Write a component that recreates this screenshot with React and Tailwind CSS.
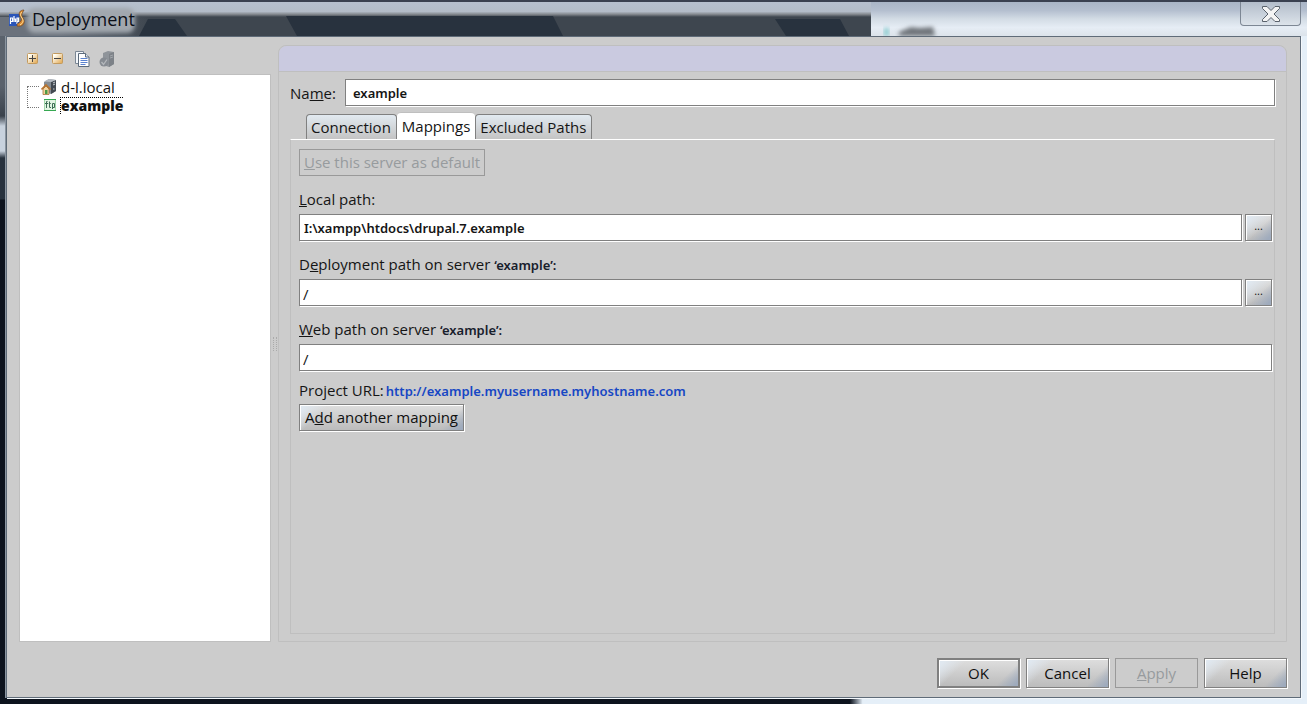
import { useState } from 'react';

const TABS = [
  { id: 'connection', label: 'Connection' },
  { id: 'mappings', label: 'Mappings' },
  { id: 'excluded', label: 'Excluded Paths' },
];

const BUTTON =
  'border-[#808080] bg-[linear-gradient(135deg,#e0e8f0_4px,transparent_20px),linear-gradient(315deg,#9fabbd_3px,transparent_16px),linear-gradient(#dedede,#bcbcbc)] text-[#101010] shadow-[inset_1px_1px_0_#fff,1px_1px_0_#fff]';
const BUTTON_OFF = 'border border-[#999] text-[#979b9e]';
const FIELD =
  'h-[27px] min-w-0 flex-1 border border-[#808080] bg-white shadow-[1px_1px_0_#fff] outline-none';
const BOLD = "font-['Noto_Sans','Open_Sans',sans-serif] text-[13px] font-semibold";

function LogoIcon() {
  return (
    <svg className="h-5 w-[18px]" viewBox="0 0 18 20" aria-hidden="true">
      <rect x="1" y="5" width="10" height="12" fill="#2a55b8" />
      <path d="M2.500 15V9h2v3.500h-2M6 7v6M6 10h1.500v3M9 15V9h1.500v3.500H9" fill="none" stroke="#fff" strokeWidth="1.200" />
      <path d="M16 1c-4 0-6 3-4 6 1 2 2 3 1 5-1 1-2 2-4 3v2c5 1 8-2 7-6-1-3-3-4-2-6 0-1 1-2 2-4z" fill="#d98a34" stroke="#70451f" strokeWidth=".7" />
      <path d="M14 3c-2 2-2 3 0 6 2 3 1 5-2 7" fill="none" stroke="#ffe19b" strokeWidth="1" />
    </svg>
  );
}

function SignIcon({ plus }) {
  const id = plus ? 'signPlus' : 'signMinus';
  return (
    <svg className="size-[11px]" viewBox="0 0 11 11" aria-hidden="true">
      <defs>
        <linearGradient id={id} x1="0" y1="0" x2="1" y2="1">
          <stop offset="0.2" stopColor="#fffdf3" />
          <stop offset="1" stopColor="#e0a347" />
        </linearGradient>
      </defs>
      <rect x=".5" y=".5" width="10" height="10" rx="1" fill={`url(#${id})`} stroke="#c39a5e" />
      <path d={plus ? 'M2 5.500h7M5.500 2v7' : 'M2 5.500h7'} stroke="#444" />
    </svg>
  );
}

function CopyIcon() {
  return (
    <svg className="h-4 w-[15px]" viewBox="0 0 15 16" aria-hidden="true">
      <path d="M.5.5h8v12h-8z" fill="#f4f7fb" stroke="#7b8794" />
      <path d="M3.500 2.500h7l3.500 3.500v9.500H3.500z" fill="#fff" stroke="#5c6b7c" />
      <path d="M10.500 2.500v3.500h3.500" fill="#dfe7f0" stroke="#5c6b7c" />
      <path d="M5.500 7.500h7M5.500 9.500h7M5.500 11.500h7M5.500 13.500h5" stroke="#5b83d0" />
    </svg>
  );
}

function ServerCheckIcon() {
  return (
    <svg className="h-4 w-4" viewBox="0 0 16 16" aria-hidden="true">
      <path d="M4 2l5-2 6 1v12l-5 3-6-2z" fill="#8f949a" />
      <path d="M10 3l5-2v12l-5 3z" fill="#7d8288" />
      <path d="M11 5l3-1M11 7l3-1" stroke="#a2a6ab" />
      <circle cx="5" cy="11" r="4.500" fill="#868b92" />
      <path d="M2.500 11l2 2.500 3.500-5" fill="none" stroke="#b4b8bc" strokeWidth="1.300" />
    </svg>
  );
}

function HomeServerIcon() {
  return (
    <svg className="h-4 w-4" viewBox="0 0 16 16" aria-hidden="true">
      <path d="M3 3l5-3 7 1v11l-5 3-7-2z" fill="#858c94" />
      <path d="M10 3l5-2v11l-5 3z" fill="#434a52" />
      <path d="M3 2.500L8 0l7 1-5 2z" fill="#b4bac1" />
      <path d="M12 4l2-1M12 6l2-1M12 10h1.500" stroke="#c9cfd4" />
      <path d="M2 10l3-3 3 3v5.500H2z" fill="#f2d3a0" stroke="#a06426" strokeWidth=".7" />
      <path d="M.5 10.500l4.500-4.500 4.500 4.500" fill="none" stroke="#b8742f" strokeWidth="1.600" />
      <rect x="4" y="11" width="2.500" height="4" fill="#4d9b46" />
    </svg>
  );
}

function FtpIcon() {
  return (
    <svg className="h-3 w-3" viewBox="0 0 12 12" aria-hidden="true">
      <rect width="12" height="12" fill="#e2f5e3" />
      <path d="M0 .5h12M0 11.500h12" stroke="#36a852" />
      <path d="M.5 1v10M11.500 1v10" stroke="#a3d8ac" />
      <path d="M3.500 2.500H2.500V9M1 4.500h3M5.500 2.500v6H7M4.800 4.500h2M8.500 10V4.500h2v4h-2" fill="none" stroke="#3d6e55" />
    </svg>
  );
}

function CloseIcon() {
  return (
    <svg className="h-4 w-5" viewBox="0 0 20 16" aria-hidden="true">
      <path d="M1.500.5h4.500l4 4 4-4h4.500v2L13 8l5.500 5.500v2H14l-4-4-4 4H1.500v-2L7 8 1.500 2.500z" fill="#f4f4f4" stroke="#5a626c" />
    </svg>
  );
}

// what shows through the glass of the title bar
function Backdrop() {
  return (
    <svg className="absolute inset-0 h-full w-full" viewBox="0 0 1307 34" preserveAspectRatio="none" aria-hidden="true">
      <defs>
        <linearGradient id="glass" x1="0" y1="0" x2="0" y2="1">
          <stop offset="0" stopColor="#a9b5c6" />
          <stop offset="0.25" stopColor="#b4bfcf" />
          <stop offset="0.5" stopColor="#d3dce5" />
          <stop offset="0.75" stopColor="#e6edf5" />
          <stop offset="1" stopColor="#dce3ea" />
        </linearGradient>
        <linearGradient id="shade" x1="0" y1="0" x2="0" y2="1">
          <stop offset="0" stopColor="#b6c0ce" />
          <stop offset="0.28" stopColor="#b3bcc8" />
          <stop offset="0.36" stopColor="#858a90" />
          <stop offset="0.44" stopColor="#3e464f" />
          <stop offset="1" stopColor="#3e464f" />
        </linearGradient>
        <linearGradient id="corner" x1="0" y1="0" x2="1" y2="0">
          <stop offset="0.4" stopColor="#6b727c" />
          <stop offset="1" stopColor="#3e464f" />
        </linearGradient>
        <filter id="soft" x="-20%" y="-40%" width="140%" height="180%">
          <feGaussianBlur stdDeviation="2" />
        </filter>
      </defs>
      <rect width="1307" height="34" fill="url(#glass)" />
      <rect width="871" height="34" fill="url(#shade)" />
      <rect y="15" width="150" height="19" fill="url(#corner)" />
      <path d="M148 17h27l12 17h-48zM286 14h267l10 20H297zM775 17h65l9 17h-63z" fill="#28323e" />
      <path d="M870 12v22" stroke="#858a90" strokeWidth="3" filter="url(#soft)" />
      <rect x="884" y="26" width="5" height="8" fill="#8ccdd0" filter="url(#soft)" />
      <path d="M899 34v-4l12-5 8 1 14-1 2 9z" fill="#70757a" filter="url(#soft)" />
      <rect x="27" y="6" width="108" height="25" rx="8" fill="#a1a7ae" filter="url(#soft)" />
    </svg>
  );
}

function TitleBar() {
  return (
    <header className="relative flex h-9 items-start justify-between border-t-2 border-[#3a4150]">
      <Backdrop />
      <div className="relative flex h-full items-center gap-1.5 pl-2">
        <LogoIcon />
        <h1 className="text-lg text-[#0b0f18]">Deployment</h1>
      </div>
      <button
        type="button"
        aria-label="Close"
        className="relative mr-1.5 flex h-6 w-[61px] items-center justify-center rounded-b border border-t-0 border-[#7d8794] bg-linear-to-b from-[#b3bdca] to-[#dce3ea]"
      >
        <CloseIcon />
      </button>
    </header>
  );
}

function ServerTree() {
  return (
    <aside className="flex w-[252px] shrink-0 flex-col">
      <div className="flex h-[29px] items-center gap-[14px] pb-0.5 pl-2">
        <button type="button" aria-label="Add server"><SignIcon plus /></button>
        <button type="button" aria-label="Remove server"><SignIcon /></button>
        <div className="-ml-0.5 flex items-center gap-[9px]">
          <button type="button" aria-label="Copy server"><CopyIcon /></button>
          <button type="button" aria-label="Use as default" disabled><ServerCheckIcon /></button>
        </div>
      </div>
      <div className="flex flex-1 border border-[#bfbfbf] bg-white pt-[3px] pl-[7px]">
        <div className="mt-2 h-[22px] w-3 border-y border-l border-dotted border-[#777]" />
        <ul className="pl-0.5 leading-[18px] text-[#111]">
          <li className="flex h-[18px] items-center gap-1">
            <HomeServerIcon />
            <span>d-l.local</span>
          </li>
          <li className="flex h-[18px] items-center gap-1 pl-[3px]">
            <FtpIcon />
            <span className="border-t border-l border-dotted border-black text-[14px] leading-4 font-extrabold">example</span>
          </li>
        </ul>
      </div>
    </aside>
  );
}

function PathField({ id, label, value, bold, browse }) {
  return (
    <div className="mb-2.5">
      <label htmlFor={id} className="block h-7 leading-[26px]">{label}</label>
      <div className="flex gap-[3px]">
        <input
          id={id}
          defaultValue={value}
          className={bold ? `${FIELD} ${BOLD} px-1` : `${FIELD} px-[3px] pt-0.5`}
        />
        {browse && (
          <button type="button" aria-label="Browse" className={`${BUTTON} h-[27px] w-[27px] border pb-1 text-[11px] leading-3`}>
            ...
          </button>
        )}
      </div>
    </div>
  );
}

function Server() {
  return <span className={`${BOLD} text-[#18202c]`}>‘example’:</span>;
}

function MappingsPanel() {
  return (
    <section className="flex-1 border border-[#bfbfbf] border-t-white pt-[9px] pr-0.5 pl-2">
      <button type="button" disabled className={`${BUTTON_OFF} block h-[27px] w-[186px]`}>
        <u>U</u>se this server as default
      </button>
      <div className="pt-2.5">
        <PathField id="local" label={<><u>L</u>ocal path:</>} value="I:\xampp\htdocs\drupal.7.example" bold browse />
        <PathField id="deploy" label={<>D<u>e</u>ployment path on server <Server /></>} value="/" browse />
        <PathField id="web" label={<><u>W</u>eb path on server <Server /></>} value="/" />
      </div>
      <p className="h-[18px] leading-[18px]">
        Project URL:
        <a href="http://example.myusername.myhostname.com" className={`${BOLD} ml-0.5 text-[#1747c4]`}>
          http://example.myusername.myhostname.com
        </a>
      </p>
      <button type="button" className={`${BUTTON} mt-[5px] block h-[27px] w-[165px] border`}>
        A<u>d</u>d another mapping
      </button>
    </section>
  );
}

export default function App() {
  const [tab, setTab] = useState('mappings');

  return (
    <div className="flex min-h-screen flex-col bg-linear-to-r from-[#0d131d] from-65% to-[#e5eff8] to-66% font-['Open_Sans','Noto_Sans',sans-serif] text-[15px] text-[#151515]">
      <TitleBar />
      <div className="flex flex-1 pr-1.5 pb-1.5">
        <div className="w-1.5 border-r border-[#8b95a0] bg-[linear-gradient(#5a626c_50px,#3a424c_80px,#c8d2de_90px,#c8d2de_115px,#28323e_122px,#28323e_163px,#0d131d_164px)]" />
        <main className="flex min-w-0 flex-1 flex-col border border-[#5f6b78] bg-[#ccc] pt-2 pr-[13px] pb-[9px] pl-3 shadow-[1px_1px_0_#f4f8fc]">
          <div className="flex flex-1">
            <ServerTree />
            <div className="flex w-[7px] items-center justify-center">
              <div className="h-3.5 w-1 border-x border-dotted border-[#aaa]" />
            </div>
            <div className="flex min-w-0 flex-1 flex-col rounded-t-lg border border-[#bfbfbf]">
              <div className="h-[26px] rounded-t-lg border-b border-[#bfbfbf] bg-[#cacae0]" />
              <div className="flex flex-1 flex-col py-[7px] pr-[11px] pl-[11px]">
                <div className="flex items-center">
                  <label htmlFor="name" className="w-[55px] pt-0.5">Na<u>m</u>e:</label>
                  <input id="name" defaultValue="example" className={`${FIELD} ${BOLD} pl-[7px]`} />
                </div>
                <div role="tablist" className="mt-1.5 flex h-[27px] items-end pl-4">
                  {TABS.map(t => (
                    <button
                      key={t.id}
                      type="button"
                      role="tab"
                      aria-selected={tab === t.id}
                      onClick={() => setTab(t.id)}
                      className={
                        tab === t.id
                          ? 'h-[27px] rounded-t border-t border-[#bfbfbf] bg-white px-[5px]'
                          : 'h-[25px] rounded-t border border-b-0 border-[#808080] bg-linear-to-b from-[#e2eaf1] to-[#c4c4c4] pr-[5px] pl-1'
                      }
                    >
                      {t.label}
                    </button>
                  ))}
                </div>
                <MappingsPanel />
              </div>
            </div>
          </div>
          <footer className="mt-4 flex justify-end gap-1.5">
            <button type="button" className={`${BUTTON} h-[30px] w-[83px] border-2`}>OK</button>
            <button type="button" className={`${BUTTON} h-[30px] w-[83px] border`}>Cancel</button>
            <button type="button" disabled className={`${BUTTON_OFF} h-[30px] w-[83px]`}><u>A</u>pply</button>
            <button type="button" className={`${BUTTON} h-[30px] w-[83px] border`}>Help</button>
          </footer>
        </main>
      </div>
    </div>
  );
}
